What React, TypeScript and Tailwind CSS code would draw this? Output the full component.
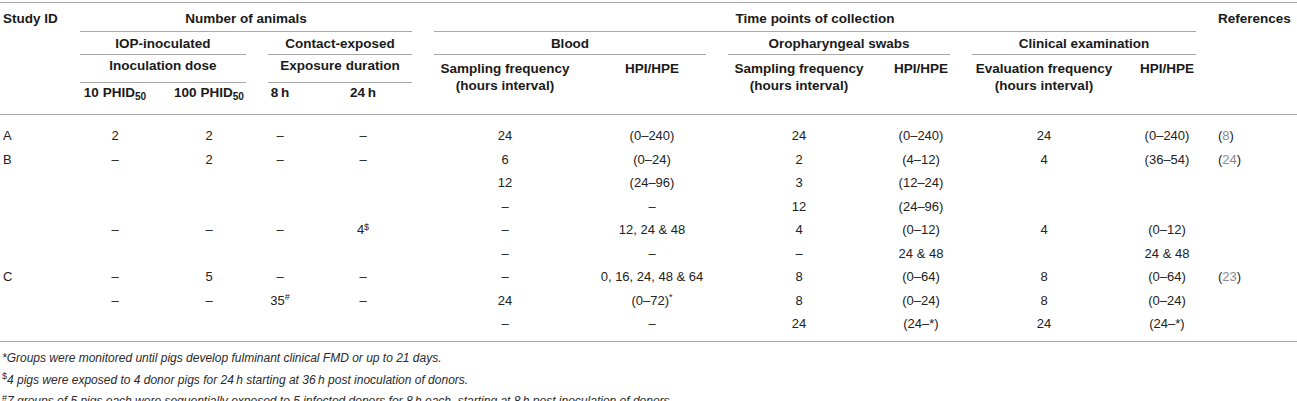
import type { ReactNode } from "react";

const cols =
  "grid grid-cols-[55px_70px_74px_24px_98px_142px_108px_142px_58px_144px_58px_1fr] gap-x-[22px] pl-[3px]";

const D = "\u2013";

const Ref = ({ n }: { n: string }) => (
  <span>
    (<span className="text-[#8c8c8c]">{n}</span>)
  </span>
);

const Sup = ({ c }: { c: string }) => <sup className="text-[9px]">{c}</sup>;

const PHID = ({ n }: { n: string }) => (
  <span>
    {n} PHID<sub>50</sub>
  </span>
);

const rows: ReactNode[][] = [
  ["A", "2", "2", D, D, "24", `(0${D}240)`, "24", `(0${D}240)`, "24", `(0${D}240)`, <Ref n="8" />],
  ["B", D, "2", D, D, "6", `(0${D}24)`, "2", `(4${D}12)`, "4", `(36${D}54)`, <Ref n="24" />],
  ["", "", "", "", "", "12", `(24${D}96)`, "3", `(12${D}24)`, "", "", ""],
  ["", "", "", "", "", D, D, "12", `(24${D}96)`, "", "", ""],
  ["", D, D, D, <span>4<Sup c="$" /></span>, D, "12, 24 & 48", "4", `(0${D}12)`, "4", `(0${D}12)`, ""],
  ["", "", "", "", "", D, D, D, "24 & 48", "", "24 & 48", ""],
  ["C", D, "5", D, D, D, "0, 16, 24, 48 & 64", "8", `(0${D}64)`, "8", `(0${D}64)`, <Ref n="23" />],
  ["", D, D, <span>35<Sup c="#" /></span>, D, "24", <span>(0{D}72)<Sup c="*" /></span>, "8", `(0${D}24)`, "8", `(0${D}24)`, ""],
  ["", "", "", "", "", D, D, "24", `(24${D}*)`, "24", `(24${D}*)`, ""],
];

export default function App() {
  return (
    <div className="w-[1297px] h-[401px] overflow-hidden bg-white font-['Liberation_Sans',Arial,sans-serif] text-[13px] text-[#222]">
      <div className="mt-[2px] border-t border-[#a8a8a8]">
        {/* header */}
        <div className={`${cols} grid-rows-[29px_23px_28px_31px] border-b border-[#a8a8a8] font-bold text-[13.5px] text-[#1a1a1a] leading-[17px] whitespace-nowrap`}>
          <div className="row-span-4 col-start-1 row-start-1 pt-[6.5px]">Study ID</div>
          <div className="col-start-2 col-span-4 row-start-1 pt-[6.5px] text-center border-b border-[#a8a8a8]">Number of animals</div>
          <div className="col-start-6 col-span-6 row-start-1 pt-[6.5px] text-center border-b border-[#a8a8a8]">Time points of collection</div>
          <div className="col-start-12 row-start-1 row-span-4 pt-[6.5px]">References</div>

          <div className="col-start-2 col-span-2 row-start-2 pt-[2.5px] text-center border-b border-[#a8a8a8]">IOP-inoculated</div>
          <div className="col-start-4 col-span-2 row-start-2 pt-[2.5px] text-center border-b border-[#a8a8a8]">Contact-exposed</div>
          <div className="col-start-6 col-span-2 row-start-2 pt-[2.5px] text-center border-b border-[#a8a8a8]">Blood</div>
          <div className="col-start-8 col-span-2 row-start-2 pt-[2.5px] text-center border-b border-[#a8a8a8]">Oropharyngeal swabs</div>
          <div className="col-start-10 col-span-2 row-start-2 pt-[2.5px] text-center border-b border-[#a8a8a8]">Clinical examination</div>

          <div className="col-start-2 col-span-2 row-start-3 pt-[2px] text-center border-b border-[#a8a8a8]">Inoculation dose</div>
          <div className="col-start-4 col-span-2 row-start-3 pt-[2px] text-center border-b border-[#a8a8a8]">Exposure duration</div>
          <div className="col-start-6 row-start-3 row-span-2 pt-[4.5px] text-center">
            Sampling frequency<br />(hours interval)
          </div>
          <div className="col-start-7 row-start-3 row-span-2 pt-[4.5px] text-center">HPI/HPE</div>
          <div className="col-start-8 row-start-3 row-span-2 pt-[4.5px] text-center">
            Sampling frequency<br />(hours interval)
          </div>
          <div className="col-start-9 row-start-3 row-span-2 pt-[4.5px] text-center">HPI/HPE</div>
          <div className="col-start-10 row-start-3 row-span-2 pt-[4.5px] text-center">
            Evaluation frequency<br />(hours interval)
          </div>
          <div className="col-start-11 row-start-3 row-span-2 pt-[4.5px] text-center">HPI/HPE</div>

          <div className="col-start-2 row-start-4 pt-[1px] text-center"><PHID n="10" /></div>
          <div className="col-start-3 row-start-4 pt-[1px] text-center"><PHID n="100" /></div>
          <div className="col-start-4 row-start-4 pt-[1px] text-center">8{"\u2009"}h</div>
          <div className="col-start-5 row-start-4 pt-[1px] text-center">24{"\u2009"}h</div>
        </div>

        {/* body */}
        <div className="pt-[9px] pb-[5.5px] border-b border-[#a8a8a8] whitespace-nowrap">
          {rows.map((r, i) => (
            <div key={i} className={`${cols} h-[23.5px] items-center`}>
              {r.map((c, j) => (
                <div key={j} className={j === 0 || j === 11 ? "text-left" : "text-center"}>
                  {c}
                </div>
              ))}
            </div>
          ))}
        </div>

        {/* footnotes */}
        <div className="pt-[6px] pl-[2px] text-[12px] italic leading-[21.5px] text-[#2a2a2a]">
          <p>*Groups were monitored until pigs develop fulminant clinical FMD or up to 21 days.</p>
          <p>
            <sup className="not-italic text-[9px]">$</sup>4 pigs were exposed to 4 donor pigs for 24{"\u2009"}h starting at 36{"\u2009"}h post inoculation of donors.
          </p>
          <p>
            <sup className="not-italic text-[9px]">#</sup>7 groups of 5 pigs each were sequentially exposed to 5 infected donors for 8{"\u2009"}h each, starting at 8{"\u2009"}h post inoculation of donors.
          </p>
        </div>
      </div>
    </div>
  );
}
